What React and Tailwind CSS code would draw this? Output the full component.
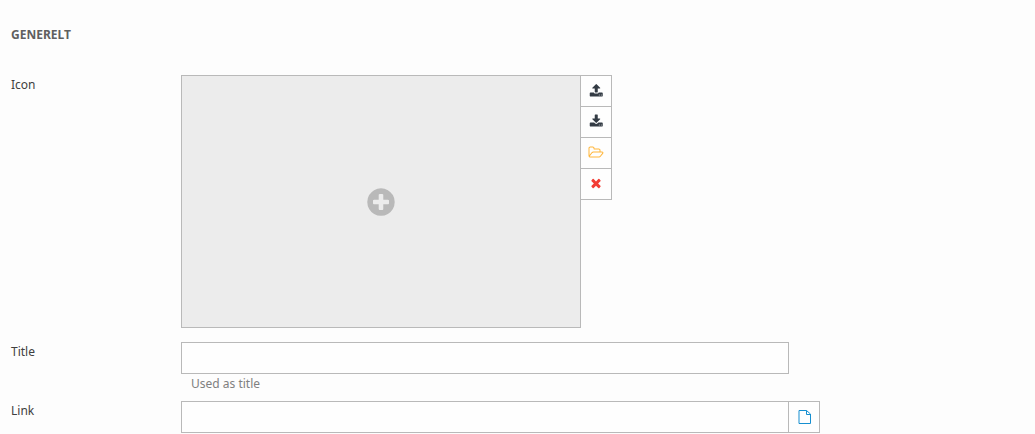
import React from 'react';

function Glyph({ viewBox = '0 0 1792 1792', className, d }) {
  return (
    <svg viewBox={viewBox} className={className} fill="currentColor" aria-hidden="true">
      <path d={d} />
    </svg>
  );
}

const paths = {
  upload:
    'M1344 1472q0-26-19-45t-45-19-45 19-19 45 19 45 45 19 45-19 19-45zm256 0q0-26-19-45t-45-19-45 19-19 45 19 45 45 19 45-19 19-45zm128-224v320q0 40-28 68t-68 28h-1472q-40 0-68-28t-28-68v-320q0-40 28-68t68-28h427q21 56 70.500 92t110.500 36h256q61 0 110.500-36t70.500-92h427q40 0 68 28t28 68zm-325-648q-17 40-59 40h-256v448q0 26-19 45t-45 19h-256q-26 0-45-19t-19-45v-448h-256q-42 0-59-40-17-39 14-69l448-448q18-19 45-19t45 19l448 448q31 30 14 69z',
  download:
    'M1344 1344q0-26-19-45t-45-19-45 19-19 45 19 45 45 19 45-19 19-45zm256 0q0-26-19-45t-45-19-45 19-19 45 19 45 45 19 45-19 19-45zm128-224v320q0 40-28 68t-68 28h-1472q-40 0-68-28t-28-68v-320q0-40 28-68t68-28h465l135 136q58 56 136 56t136-56l136-136h464q40 0 68 28t28 68zm-325-569q17 41-14 70l-448 448q-18 19-45 19t-45-19l-448-448q-31-29-14-70 17-39 59-39h256v-448q0-26 19-45t45-19h256q26 0 45 19t19 45v448h256q42 0 59 39z',
  folder:
    'M1845 931q0-35-53-35h-1088q-40 0-85.500 21.500t-71.500 52.500l-294 363q-18 24-18 40 0 35 53 35h1088q40 0 86-22t71-53l294-363q18-22 18-39zm-1141-163h768v-160q0-40-28-68t-68-28h-576q-40 0-68-28t-28-68v-64q0-40-28-68t-68-28h-320q-40 0-68 28t-28 68v853l256-315q44-53 116-87.500t140-34.500zm1269 163q0 62-46 120l-295 363q-43 53-116 87.500t-140 34.500h-1088q-92 0-158-66t-66-158v-960q0-92 66-158t158-66h320q92 0 158 66t66 158v32h544q92 0 158 66t66 158v160h192q54 0 99 24.500t67 70.500q15 32 15 68z',
  remove:
    'M1490 1322q0 40-28 68l-136 136q-28 28-68 28t-68-28l-294-294-294 294q-28 28-68 28t-68-28l-136-136q-28-28-28-68t28-68l294-294-294-294q-28-28-28-68t28-68l136-136q28-28 68-28t68 28l294 294 294-294q28-28 68-28t68 28l136 136q28 28 28 68t-28 68l-294 294 294 294q28 28 28 68z',
  plus:
    'M1344 960v-128q0-26-19-45t-45-19h-256v-256q0-26-19-45t-45-19h-128q-26 0-45 19t-19 45v256h-256q-26 0-45 19t-19 45v128q0 26 19 45t45 19h256v256q0 26 19 45t45 19h128q26 0 45-19t19-45v-256h256q26 0 45-19t19-45zm320-64q0 209-103 385.500t-279.500 279.500-385.500 103-385.500-103-279.500-279.500-103-385.500 103-385.500 279.500-279.500 385.500-103 385.500 103 279.500 279.500 103 385.500z',
};

function FileIcon() {
  return (
    <svg viewBox="0 0 13 14" className="h-[14px] w-[13px]" fill="none" stroke="currentColor" aria-hidden="true">
      <path d="M1 .5H8.5L12.5 4V13.5H1Z" />
      <path d="M8.5 .5V4.5H12.5" />
    </svg>
  );
}

function Row({ label, htmlFor, children }) {
  return (
    <div className="flex items-start">
      <label htmlFor={htmlFor} className="w-[170px] shrink-0 leading-5 text-[#404040]">
        {label}
      </label>
      <div className="min-w-0 grow">{children}</div>
    </div>
  );
}

const inputClass =
  'block h-8 w-full max-w-[608px] min-w-0 border border-[#b9b9b9] bg-[#fefefe] px-2 outline-none focus:border-[#7a7a7a]';

const actions = [
  { label: 'Upload', d: paths.upload, viewBox: '-32 64 1792 1792', style: 'text-[#333b44]' },
  { label: 'Download', d: paths.download, viewBox: '-32 64 1792 1792', style: 'text-[#333b44]' },
  { label: 'Browse', d: paths.folder, viewBox: '128 64 1792 1792', style: 'text-[#ffb63a]' },
  { label: 'Remove', d: paths.remove, viewBox: '0 128 1792 1792', style: 'text-[#f23c34]' },
];

export default function App() {
  return (
    <main className="min-h-screen bg-[#fdfdfd] px-[11px] pt-[25px] font-['Noto_Sans',sans-serif] text-[12px]">
      <h2 className="leading-5 font-bold text-[#5f5f5f]">GENERELT</h2>

      <form className="pt-[30px]" onSubmit={(e) => e.preventDefault()}>
        <Row label="Icon" htmlFor="icon-picker">
          <div className="flex items-start">
            <button
              id="icon-picker"
              type="button"
              aria-label="Add icon"
              className="flex h-[253px] w-full max-w-[400px] items-center justify-center border border-[#b9b9b9] bg-[#ececec] text-[#b9b9b9]"
            >
              <Glyph d={paths.plus} className="size-8" />
            </button>
            <div className="flex flex-col border-t border-[#b9b9b9]">
              {actions.map(({ label, d, viewBox, style }) => (
                <button
                  key={label}
                  type="button"
                  aria-label={label}
                  className={`flex h-[31px] w-[31px] items-center justify-center border-r border-b border-[#b9b9b9] bg-[#fefefe] ${style}`}
                >
                  <Glyph d={d} viewBox={viewBox} className="size-[14px] overflow-visible" />
                </button>
              ))}
            </div>
          </div>
        </Row>

        <div className="pt-[14px]">
          <Row label="Title" htmlFor="title">
            <input id="title" type="text" aria-describedby="title-hint" className={inputClass} />
            <p id="title-hint" className="px-[10px] leading-5 text-[#808080]">
              Used as title
            </p>
          </Row>
        </div>

        <div className="pt-[7px]">
          <Row label="Link" htmlFor="link">
            <div className="flex">
              <input id="link" type="text" className={inputClass} />
              <button
                type="button"
                aria-label="Choose page"
                className="flex h-8 w-[31px] shrink-0 items-center justify-center border-y border-r border-[#b9b9b9] bg-[#fefefe] text-[#168fd0]"
              >
                <FileIcon />
              </button>
            </div>
          </Row>
        </div>
      </form>
    </main>
  );
}
